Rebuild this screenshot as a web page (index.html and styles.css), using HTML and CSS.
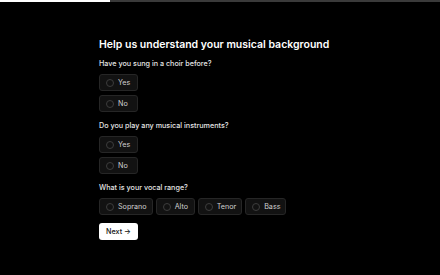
FILE: index.html
```html
<!DOCTYPE html>
<html>
    <head>
        <meta charset='utf-8'/>
        <link rel="stylesheet" href="styles.css">
    </head>
    <body>
        <div class='progress'><div class='progress-fill' style='width: 25%;'></div></div>
        <div class='survey'>
            <h1 class='title'>Help us understand your musical background</h1>

            <div class='question'>
                <p class='label'>Have you sung in a choir before?</p>
                <div class='options column'>
                    <label class='option'><span class='radio'></span>Yes</label>
                    <label class='option'><span class='radio'></span>No</label>
                </div>
            </div>

            <div class='question'>
                <p class='label'>Do you play any musical instruments?</p>
                <div class='options column'>
                    <label class='option'><span class='radio'></span>Yes</label>
                    <label class='option'><span class='radio'></span>No</label>
                </div>
            </div>

            <div class='question'>
                <p class='label'>What is your vocal range?</p>
                <div class='options row'>
                    <label class='option'><span class='radio'></span>Soprano</label>
                    <label class='option'><span class='radio'></span>Alto</label>
                    <label class='option'><span class='radio'></span>Tenor</label>
                    <label class='option'><span class='radio'></span>Bass</label>
                </div>
            </div>

            <button class='next'>Next &rarr;</button>
        </div>
    </body>
</html>
```

FILE: styles.css
```css
body{
    margin:0;
    padding:0;
    background-color:#000;
    font-family:Inter, "Liberation Sans", sans-serif;
    color:#e5e5e5;
}
.progress{
    height:2px;
    background-color:#3a3a3a;
}
.progress-fill{
    height:2px;
    background-color:#fff;
}
.survey{
    width:242px;
    margin:0 auto;
    padding-top:35px;
}
.title{
    margin:0 0 6px 0;
    font-size:10.5px;
    line-height:15px;
    font-weight:600;
    color:#fff;
}
.question{
    margin-bottom:8px;
}
.label{
    margin:0 0 4px 0;
    font-size:7.2px;
    line-height:12px;
    font-weight:500;
    color:#e5e5e5;
}
.options{
    display:flex;
    gap:4px;
}
.column{
    flex-direction:column;
    align-items:flex-start;
}
.row{
    flex-direction:row;
    gap:3px;
}
.option{
    display:flex;
    align-items:center;
    box-sizing:border-box;
    min-width:39px;
    height:17px;
    padding:0 5px 0 6px;
    background-color:#121212;
    border:1px solid #262626;
    border-radius:3px;
    font-size:7.2px;
    color:#cfcfcf;
}
.radio{
    width:6px;
    height:6px;
    border:1px solid #3d3d3d;
    border-radius:50%;
    margin-right:4px;
}
.next{
    display:block;
    height:17px;
    padding:0 7px;
    background-color:#fff;
    color:#111;
    border:none;
    border-radius:3px;
    font-family:Inter, "Liberation Sans", sans-serif;
    font-size:7.2px;
    font-weight:500;
}
```
